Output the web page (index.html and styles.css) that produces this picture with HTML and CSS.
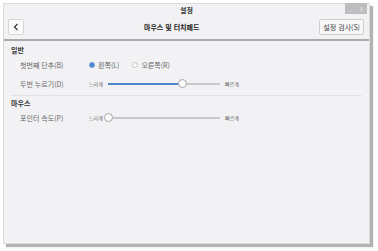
FILE: index.html
```html
<!DOCTYPE html>
<html lang="ko">
<head>
  <meta charset="UTF-8" />
  <title>설정</title>
  <link rel="stylesheet" href="styles.css">
</head>
<body>
  <div class="window">
    <div class="titlebar">
      <span class="title">설정</span>
      <div class="wm-buttons">
        <span class="wm-btn">_</span>
        <span class="wm-btn">x</span>
      </div>
    </div>
    <div class="headerbar">
      <button class="back-btn">
        <svg width="6" height="8" viewBox="0 0 6 8"><path d="M4.5 1 L1.5 4 L4.5 7" fill="none" stroke="#333" stroke-width="1.2"/></svg>
      </button>
      <span class="page-title">마우스 및 터치패드</span>
      <button class="test-btn">설정 검사(S)</button>
    </div>
    <div class="content">
      <div class="section">
        <h2>일반</h2>
        <div class="row">
          <span class="label">첫번째 단추(B)</span>
          <label class="radio checked"><span class="dot"></span>왼쪽(L)</label>
          <label class="radio"><span class="dot"></span>오른쪽(R)</label>
        </div>
        <div class="row">
          <span class="label">두번 누르기(D)</span>
          <span class="scale-text">느리게</span>
          <div class="slider">
            <div class="fill" style="width: 66%"></div>
            <div class="knob" style="left: 66%"></div>
          </div>
          <span class="scale-text">빠르게</span>
        </div>
      </div>
      <div class="section">
        <h2>마우스</h2>
        <div class="row">
          <span class="label">포인터 속도(P)</span>
          <span class="scale-text">느리게</span>
          <div class="slider">
            <div class="fill" style="width: 0%"></div>
            <div class="knob" style="left: 0%"></div>
          </div>
          <span class="scale-text">빠르게</span>
        </div>
      </div>
    </div>
  </div>
</body>
</html>
```

FILE: styles.css
```css
* {
  margin: 0;
  padding: 0;
  box-sizing: border-box;
  font-family: "Noto Sans CJK KR", "Noto Sans", sans-serif;
}

body {
  background-color: #ffffff;
  padding: 3px 8px 7px 3px;
  height: 251px;
}

.window {
  width: 367px;
  height: 241px;
  background-color: #f2f1f3;
  border: 1px solid #dcdbdd;
  box-shadow: 3px 3px 1px rgba(0, 0, 0, 0.3);
  display: flex;
  flex-direction: column;
}

.titlebar {
  height: 11px;
  display: flex;
  justify-content: center;
  align-items: center;
  position: relative;
}

.title {
  font-size: 7px;
  color: #333;
  font-weight: 600;
}

.wm-buttons {
  position: absolute;
  right: 2px;
  top: -1px;
  display: flex;
}

.wm-btn {
  width: 11px;
  height: 11px;
  background-color: #bdbcbf;
  color: #eee;
  font-size: 6px;
  display: flex;
  justify-content: center;
  align-items: center;
}

.headerbar {
  height: 26px;
  display: flex;
  align-items: center;
  justify-content: space-between;
  padding: 0 5px 0 4px;
  border-bottom: 2px solid #a9a8ab;
}

.back-btn {
  width: 16px;
  height: 16px;
  background-color: #fafafa;
  border: 1px solid #d6d5d8;
  border-radius: 2px;
  display: flex;
  justify-content: center;
  align-items: center;
}

.page-title {
  font-size: 7px;
  font-weight: 600;
  color: #222;
}

.test-btn {
  height: 16px;
  padding: 0 3px;
  background-color: #f7f7f8;
  border: 1px solid #cfcfd2;
  border-radius: 2px;
  font-size: 7px;
  color: #444;
}

.content {
  padding: 5px 7px 0 7px;
}

.section {
  padding-bottom: 2px;
}

.section + .section {
  border-top: 1px solid #e2e1e4;
  padding-top: 3px;
}

.section h2 {
  font-size: 7px;
  font-weight: 600;
  color: #333;
  height: 9px;
  line-height: 9px;
}

.row {
  display: flex;
  align-items: center;
  height: 19px;
  padding-left: 9px;
  font-size: 7px;
  color: #666;
}

.label {
  width: 69px;
}

.radio {
  display: flex;
  align-items: center;
  margin-right: 13px;
}

.dot {
  width: 6px;
  height: 6px;
  border-radius: 50%;
  border: 1px solid #c7c7ca;
  background-color: #fff;
  margin-right: 3px;
}

.radio.checked .dot {
  background-color: #4a86d4;
  border-color: #6b9fe0;
}

.scale-text {
  font-size: 5px;
  color: #555;
  width: 15px;
}

.slider {
  position: relative;
  width: 112px;
  height: 2px;
  background-color: #c8c7ca;
  margin: 0 5px 0 4px;
}

.fill {
  height: 2px;
  background-color: #4f86cf;
}

.knob {
  position: absolute;
  top: -4px;
  width: 9px;
  height: 9px;
  margin-left: -4px;
  border-radius: 50%;
  background-color: #fbfbfb;
  border: 1px solid #a8a7aa;
}
```
